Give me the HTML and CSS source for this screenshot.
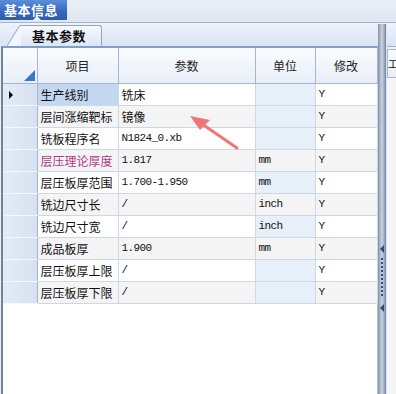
FILE: index.html
```html
<!DOCTYPE html>
<html>
<head>
<meta charset="utf-8">
<link rel="stylesheet" href="styles.css">
</head>
<body>
<div class="app">
  <div class="topbar">
    <div class="maintab">基本信息</div>
  </div>
  <div class="main">
    <div class="leftpane">
      <div class="tabstrip">
        <div class="subtab">
          <svg class="slant" width="14" height="21" viewBox="0 0 14 21"><path d="M0 21 L12 1.5 Q13 0.5 14 0.5 L14 21 Z" fill="#f2f6fc"/><path d="M0 21 L12 1.5 Q13 0.5 14 0.5" fill="none" stroke="#8fa5c4"/></svg>
          <div class="subtab-body">基本参数</div>
        </div>
      </div>
      <div class="gridframe">
        <table class="grid">
          <colgroup>
            <col class="c0"><col class="c1"><col class="c2"><col class="c3"><col class="c4">
          </colgroup>
          <thead>
            <tr>
              <th class="corner"><span class="tri"></span></th>
              <th>项目</th><th>参数</th><th>单位</th><th>修改</th>
            </tr>
          </thead>
          <tbody>
            <tr class="odd"><td class="rh"><span class="ptr"></span></td><td class="name sel">生产线别</td><td class="cjk">铣床</td><td class="unit ro"></td><td class="mono">Y</td></tr>
            <tr class="even"><td class="rh"></td><td class="name">层间涨缩靶标</td><td class="cjk">镜像</td><td class="unit ro"></td><td class="mono">Y</td></tr>
            <tr class="odd"><td class="rh"></td><td class="name">铣板程序名</td><td class="mono">N1824_0.xb</td><td class="unit ro"></td><td class="mono">Y</td></tr>
            <tr class="even"><td class="rh"></td><td class="name pink">层压理论厚度</td><td class="mono">1.817</td><td class="unit mono">mm</td><td class="mono">Y</td></tr>
            <tr class="odd"><td class="rh"></td><td class="name">层压板厚范围</td><td class="mono">1.700-1.950</td><td class="unit ro mono">mm</td><td class="mono">Y</td></tr>
            <tr class="even"><td class="rh"></td><td class="name">铣边尺寸长</td><td class="mono">/</td><td class="unit mono">inch</td><td class="mono">Y</td></tr>
            <tr class="odd"><td class="rh"></td><td class="name">铣边尺寸宽</td><td class="mono">/</td><td class="unit ro mono">inch</td><td class="mono">Y</td></tr>
            <tr class="even"><td class="rh"></td><td class="name">成品板厚</td><td class="mono">1.900</td><td class="unit mono">mm</td><td class="mono">Y</td></tr>
            <tr class="odd"><td class="rh"></td><td class="name">层压板厚上限</td><td class="mono">/</td><td class="unit ro"></td><td class="mono">Y</td></tr>
            <tr class="even"><td class="rh"></td><td class="name">层压板厚下限</td><td class="mono">/</td><td class="unit ro"></td><td class="mono">Y</td></tr>
          </tbody>
        </table>
        <svg class="arrow" width="60" height="40" viewBox="0 0 60 40">
          <line x1="14" y1="9" x2="49" y2="33" stroke="#f07676" stroke-width="3" stroke-linecap="round"/>
          <path d="M2 1 L22 5 L12 15 Z" fill="#f07676"/>
        </svg>
      </div>
    </div>
    <div class="splitter">
      <span class="sarrow"></span>
      <span class="grip"></span>
      <span class="sarrow"></span>
    </div>
    <div class="rightpane">
      <div class="rtabstrip"></div>
      <div class="rhead">工</div>
      <div class="rbody"></div>
    </div>
  </div>
</div>
</body>
</html>
```
FILE: styles.css
```css
* { box-sizing: border-box; }
html, body { margin: 0; padding: 0; }
body {
  width: 396px;
  height: 394px;
  overflow: hidden;
  background: #f0f0f0;
  font-family: "Noto Sans CJK SC", "Noto Sans", sans-serif;
  font-size: 12px;
  color: #111;
}
.app { display: flex; flex-direction: column; height: 394px; }
.topbar {
  height: 23px;
  border-bottom: 1px solid #a6b5ca;
  background: linear-gradient(#eaeff6, #dfe6f0);
  flex: none;
}
.maintab {
  position: relative;
  width: 67px;
  height: 20px;
  background: linear-gradient(#5b8fdc, #3467bd 60%, #2d5cae);
  color: #fff;
  font-weight: bold;
  font-size: 13px;
  line-height: 20px;
  padding-left: 4px;
  letter-spacing: 0.5px;
}
.maintab::after {
  content: "";
  position: absolute;
  left: 33px;
  bottom: 0;
  border-left: 4px solid transparent;
  border-right: 4px solid transparent;
  border-bottom: 4px solid #f4f7fb;
}
.main { display: flex; flex: 1; min-height: 0; }
.leftpane { width: 378px; display: flex; flex-direction: column; flex: none; }
.tabstrip {
  height: 23px;
  background: linear-gradient(#eef3fa, #d9e4f3);
  display: flex;
  align-items: flex-end;
  padding-left: 7px;
  flex: none;
}
.subtab { display: flex; align-items: flex-end; height: 21px; }
.slant { display: block; }
.subtab-body {
  width: 81px;
  height: 21px;
  border-top: 1px solid #8fa5c4;
  border-right: 1px solid #8fa5c4;
  border-radius: 0 3px 0 0;
  background: linear-gradient(#f7f9fd, #dce6f4);
  font-weight: bold;
  font-size: 13px;
  line-height: 20px;
  text-align: center;
  padding-right: 4px;
  letter-spacing: 0.5px;
}
.gridframe {
  position: relative;
  flex: 1;
  margin-left: 1px;
  border-left: 2px solid #6f819d;
  border-top: 2px solid #7f9fcb;
  border-right: 1px solid #a8bedd;
  background: #fff;
}
.grid {
  border-collapse: collapse;
  table-layout: fixed;
  width: 374px;
}
.c0 { width: 34px; }
.c1 { width: 81px; }
.c2 { width: 137px; }
.c3 { width: 60px; }
.c4 { width: 62px; }
.grid th {
  height: 35px;
  padding: 0;
  font-weight: normal;
  font-size: 12px;
  color: #222;
  background: linear-gradient(#fafbfe, #e8eef7);
  border-right: 1px solid #a3b6d3;
  border-bottom: 1px solid #a3b6d3;
  text-align: center;
}
.grid th.corner { position: relative; }
.tri {
  position: absolute;
  right: 2px;
  bottom: 2px;
  width: 0; height: 0;
  border-left: 11px solid transparent;
  border-bottom: 11px solid #3c76c8;
}
.grid td {
  height: 22px;
  padding: 0 0 0 3px;
  border-right: 1px solid #cad8ec;
  border-bottom: 1px solid #cad8ec;
  white-space: nowrap;
  overflow: hidden;
  line-height: 21px;
}
.grid tr.even td { background: #f4f4f4; }
.grid tr.odd td { background: #fff; }
.grid td.rh {
  background: linear-gradient(90deg, #e3eaf5, #d6e1ef) !important;
  border-right: 1px solid #9fb5d5;
  border-bottom: 1px solid #f3f6fb;
  position: relative;
}
.ptr {
  position: absolute;
  left: 6px;
  top: 7px;
  border-top: 4px solid transparent;
  border-bottom: 4px solid transparent;
  border-left: 4px solid #000;
}
.grid td.name { font-size: 12px; color: #111; }
.grid td.name.sel { background: #c3d7f0 !important; }
.grid td.pink { color: #b03a88; }
.grid td.cjk { font-size: 12px; }
.grid td.unit.ro { background: #e7eff9 !important; }
.grid tr.odd td.unit:not(.ro) { background: #fff; }
.mono {
  font-family: "Liberation Mono", "DejaVu Sans Mono", monospace;
  font-size: 11px;
  letter-spacing: -0.6px;
}
.arrow {
  position: absolute;
  left: 185px;
  top: 67px;
}
.splitter {
  width: 8px;
  flex: none;
  margin-top: 1px;
  background: linear-gradient(90deg, #7d8ea9 0, #aab6c8 25%, #c9d2df 50%, #9aa8bd 80%, #6e7e98 100%);
  display: flex;
  flex-direction: column;
  align-items: center;
  padding-top: 221px;
}
.sarrow {
  width: 0; height: 0;
  border-top: 4px solid transparent;
  border-bottom: 4px solid transparent;
  border-right: 4px solid #2f4a78;
  margin-left: -1px;
}
.grip {
  width: 2px;
  height: 38px;
  margin: 5px 0 8px;
  background: repeating-linear-gradient(#2f4f8a 0 2px, transparent 2px 4px);
}
.rightpane {
  flex: 1;
  min-width: 0;
  display: flex;
  flex-direction: column;
  background: #eef1f6;
  border-left: 1px solid #dfe5ee;
}
.rtabstrip {
  height: 24px;
  background: linear-gradient(#eef3fa, #d9e4f3);
  border-bottom: 1px solid #9db2d0;
  flex: none;
}
.rhead {
  height: 29px;
  margin-top: 2px;
  background: linear-gradient(#fafbfe, #e8eef7);
  border-top: 1px solid #a3b6d3;
  border-bottom: 1px solid #a3b6d3;
  border-left: 1px solid #a3b6d3;
  font-size: 10px;
  line-height: 27px;
  padding-left: 0;
  white-space: nowrap;
  overflow: hidden;
  flex: none;
}
.rbody { flex: 1; background: #f4f5f7; }
```
